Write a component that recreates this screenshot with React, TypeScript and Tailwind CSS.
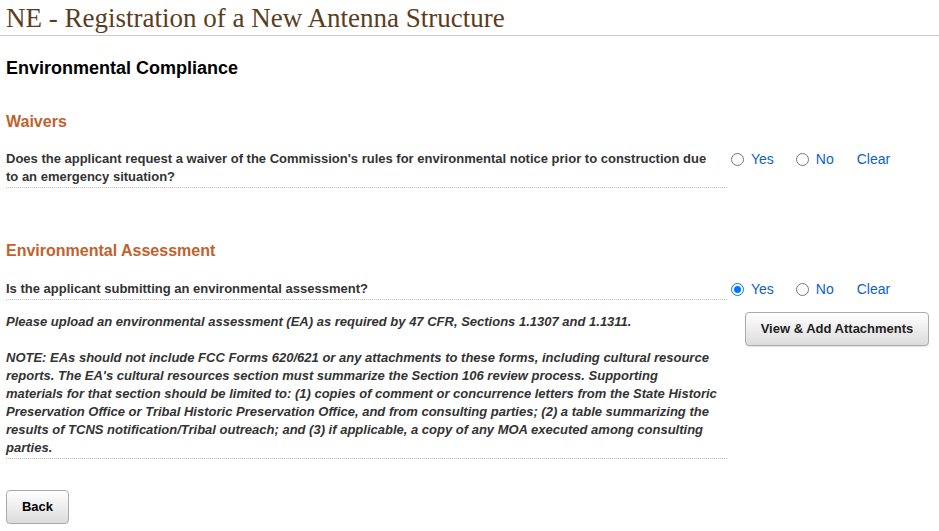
import React from "react";

function Radio({ checked, label }: { checked?: boolean; label: string }) {
  return (
    <span className="flex items-center">
      {checked ? (
        <span className="w-[13px] h-[13px] rounded-full border-[1.5px] border-[#0075ff] flex items-center justify-center">
          <span className="w-[7px] h-[7px] rounded-full bg-[#0075ff]" />
        </span>
      ) : (
        <span className="w-[13px] h-[13px] rounded-full border border-[#767676] bg-white" />
      )}
      <span className="ml-[7px] text-[#0b62c4]">{label}</span>
    </span>
  );
}

function Options({ yes }: { yes?: boolean }) {
  return (
    <div className="flex items-center text-[14px] pl-[4px]">
      <Radio checked={yes} label="Yes" />
      <span className="ml-[22px]">
        <Radio label="No" />
      </span>
      <span className="ml-[23px] text-[#0b62c4]">Clear</span>
    </div>
  );
}

export default function App() {
  const arial = { fontFamily: '"Liberation Sans", Arial, sans-serif' };
  return (
    <div className="bg-white w-[939px] h-[531px] overflow-hidden text-[#333]" style={arial}>
      <div className="border-b border-[#cccccc] h-[36px] px-[6px]">
        <h1
          className="text-[27px] leading-[36px] text-[#5b3d1e] whitespace-nowrap"
          style={{ fontFamily: '"Liberation Serif", "Times New Roman", serif' }}
        >
          NE - Registration of a New Antenna Structure
        </h1>
      </div>
      <div className="px-[6px]">
        <h2 className="mt-[22px] text-[18px] leading-[20px] font-bold text-black">Environmental Compliance</h2>

        <h3 className="mt-[34px] text-[16px] leading-[20px] font-bold text-[#c0622d]">Waivers</h3>

        <div className="mt-[18px] flex">
          <div className="w-[721px] pr-[3px] border-b border-dotted border-[#bbbbbb] pb-[1px] text-[13px] leading-[18px] font-bold">
            Does the applicant request a waiver of the Commission's rules for environmental notice prior to construction due
            <br />
            to an emergency situation?
          </div>
          <div className="h-[18px] flex items-center">
            <Options />
          </div>
        </div>

        <h3 className="mt-[53px] text-[16px] leading-[20px] font-bold text-[#c0622d]">Environmental Assessment</h3>

        <div className="mt-[19px] flex">
          <div className="w-[721px] pr-[3px] border-b border-dotted border-[#bbbbbb] pb-[1px] text-[13px] leading-[18px] font-bold">
            Is the applicant submitting an environmental assessment?
          </div>
          <div className="h-[18px] flex items-center">
            <Options yes />
          </div>
        </div>

        <div className="flex mt-[13px]">
          <div className="w-[721px] pr-[3px] border-b border-dotted border-[#bbbbbb] pb-[1px] text-[13px] leading-[18px] font-bold italic">
            <p>Please upload an environmental assessment (EA) as required by 47 CFR, Sections 1.1307 and 1.1311.</p>
            <p className="mt-[18px]">
              NOTE: EAs should not include FCC Forms 620/621 or any attachments to these forms, including cultural resource
              <br />
              reports. The EA's cultural resources section must summarize the Section 106 review process. Supporting
              <br />
              materials for that section should be limited to: (1) copies of comment or concurrence letters from the State
              Historic
              <br />
              Preservation Office or Tribal Historic Preservation Office, and from consulting parties; (2) a table summarizing
              the
              <br />
              results of TCNS notification/Tribal outreach; and (3) if applicable, a copy of any MOA executed among consulting
              <br />
              parties.
            </p>
          </div>
          <div className="pl-[18px] -mt-[1px]">
            <button className="h-[34px] w-[184px] rounded-[4px] border border-[#aaaaaa] bg-gradient-to-b from-white to-[#dcdcdc] text-[13px] font-bold text-[#222] shadow-[0_1px_1px_rgba(0,0,0,0.1)]">
              View &amp; Add Attachments
            </button>
          </div>
        </div>

        <button className="mt-[31px] h-[34px] w-[63px] rounded-[4px] border border-[#aaaaaa] bg-gradient-to-b from-white to-[#dcdcdc] text-[13px] font-bold text-black">
          Back
        </button>
      </div>
    </div>
  );
}
